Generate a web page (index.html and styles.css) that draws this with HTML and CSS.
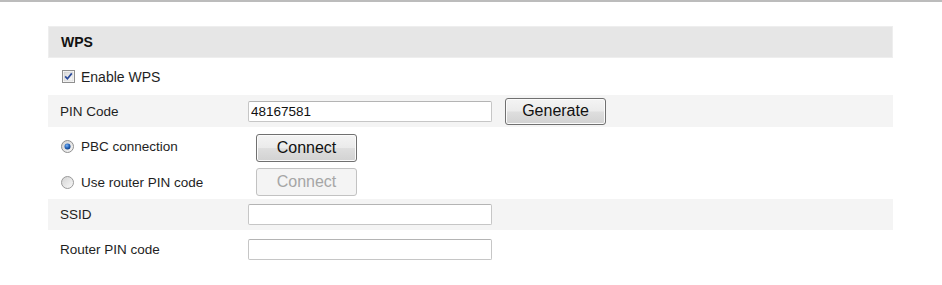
FILE: index.html
```html
<!DOCTYPE html>
<html lang="en">

<head>
    <meta charset="UTF-8">
    <title>WPS</title>
    <link rel="stylesheet" href="styles.css">
</head>

<body>
    <div class="top-line"></div>
    <div class="wps-panel">
        <div class="wps-title">WPS</div>

        <div class="wps-row row-enable">
            <label class="check-label">
                <svg class="check-box" width="13" height="13" viewBox="0 0 13 13">
                    <defs>
                        <linearGradient id="cbg" x1="0" y1="0" x2="1" y2="1">
                            <stop offset="0" stop-color="#d8d8d8" />
                            <stop offset="1" stop-color="#fbfbfb" />
                        </linearGradient>
                    </defs>
                    <rect x="0.5" y="0.5" width="12" height="12" fill="#fff" stroke="#8f8f8f" />
                    <rect x="2" y="2" width="9" height="9" fill="url(#cbg)" stroke="#c9c9c9" stroke-width="0.6" />
                    <path d="M3.2 6.4 L5.4 8.8 L9.8 3.4" fill="none" stroke="#2a4a9a" stroke-width="1.7" />
                </svg>
                Enable WPS
            </label>
        </div>

        <div class="wps-row row-pin shaded">
            <div class="wps-label">PIN Code</div>
            <input class="text-input" type="text" value="48167581">
            <button class="btn btn-generate">Generate</button>
        </div>

        <div class="wps-row row-pbc">
            <label class="radio-label">
                <svg class="radio" width="13" height="13" viewBox="0 0 13 13">
                    <defs>
                        <linearGradient id="rbg" x1="0" y1="0" x2="1" y2="1">
                            <stop offset="0" stop-color="#cfcfcf" />
                            <stop offset="1" stop-color="#fafafa" />
                        </linearGradient>
                        <radialGradient id="rdot" cx="0.4" cy="0.35" r="0.7">
                            <stop offset="0" stop-color="#7fb4f0" />
                            <stop offset="0.5" stop-color="#2a6cc4" />
                            <stop offset="1" stop-color="#0e3574" />
                        </radialGradient>
                    </defs>
                    <circle cx="6.5" cy="6.5" r="6" fill="url(#rbg)" stroke="#8f8f8f" />
                    <circle cx="6.5" cy="6.5" r="3" fill="url(#rdot)" />
                </svg>
                PBC connection
            </label>
            <button class="btn btn-connect">Connect</button>
        </div>

        <div class="wps-row row-router">
            <label class="radio-label">
                <svg class="radio" width="13" height="13" viewBox="0 0 13 13">
                    <defs>
                        <linearGradient id="rbg2" x1="0" y1="0" x2="1" y2="1">
                            <stop offset="0" stop-color="#d2d2d2" />
                            <stop offset="1" stop-color="#fafafa" />
                        </linearGradient>
                    </defs>
                    <circle cx="6.5" cy="6.5" r="6" fill="url(#rbg2)" stroke="#9a9a9a" />
                </svg>
                Use router PIN code
            </label>
            <button class="btn btn-connect" disabled>Connect</button>
        </div>

        <div class="wps-row row-ssid shaded">
            <div class="wps-label">SSID</div>
            <input class="text-input" type="text">
        </div>

        <div class="wps-row row-routerpin">
            <div class="wps-label">Router PIN code</div>
            <input class="text-input" type="text">
        </div>
    </div>
</body>

</html>
```

FILE: styles.css
```css
body {
    margin: 0;
    font-family: "Liberation Sans", Arial, sans-serif;
    color: #1e1e1e;
    background: #fff;
}

.top-line {
    height: 2px;
    background-color: #bcbcbc;
}

.wps-panel {
    width: 845px;
    margin: 24px 0 0 48px;
}

.wps-title {
    height: 30px;
    line-height: 30px;
    padding-left: 12px;
    background-color: #e6e6e6;
    border: 1px solid #eeeeee;
    font-size: 14px;
    font-weight: bold;
    color: #111;
}

.wps-row {
    display: flex;
    align-items: center;
    font-size: 13.5px;
}

.shaded {
    background-color: #f4f4f4;
}

.row-enable {
    height: 37px;
    padding-left: 14px;
    font-size: 14px;
}

.row-pin {
    height: 32px;
}

.row-pbc {
    height: 38px;
    padding-left: 13px;
}

.row-pbc .btn {
    margin-top: 3px;
}

.row-router {
    height: 34px;
    padding-left: 13px;
}

.row-ssid {
    height: 31px;
}

.row-routerpin {
    height: 38px;
}

.wps-label {
    width: 188px;
    padding-left: 12px;
}

.check-label,
.radio-label {
    display: flex;
    align-items: center;
}

.check-box {
    margin-right: 6px;
}

.radio {
    margin-right: 7px;
}

.radio-label {
    width: 195px;
}

.text-input {
    box-sizing: border-box;
    width: 244px;
    height: 21px;
    margin: 0;
    padding: 0 2px;
    border: 1px solid #c6c6c6;
    border-top-color: #b4b4b4;
    border-radius: 2px;
    font-family: "Liberation Sans", Arial, sans-serif;
    font-size: 13.5px;
    color: #111;
    background: #fff;
    outline: none;
}

.btn {
    box-sizing: border-box;
    width: 101px;
    height: 28px;
    margin: 0;
    padding: 0;
    border: 1px solid #707070;
    border-radius: 3px;
    background: linear-gradient(#f4f4f4 0%, #ebebeb 48%, #dedede 52%, #d2d2d2 100%);
    box-shadow: inset 0 0 0 1px #fbfbfb;
    font-family: "Liberation Sans", Arial, sans-serif;
    font-size: 16px;
    color: #111;
}

.btn-generate {
    height: 27px;
    margin-left: 13px;
}

.btn:disabled {
    border-color: #c2c2c2;
    background: #f4f4f4;
    box-shadow: none;
    color: #a6a6a6;
}
```
